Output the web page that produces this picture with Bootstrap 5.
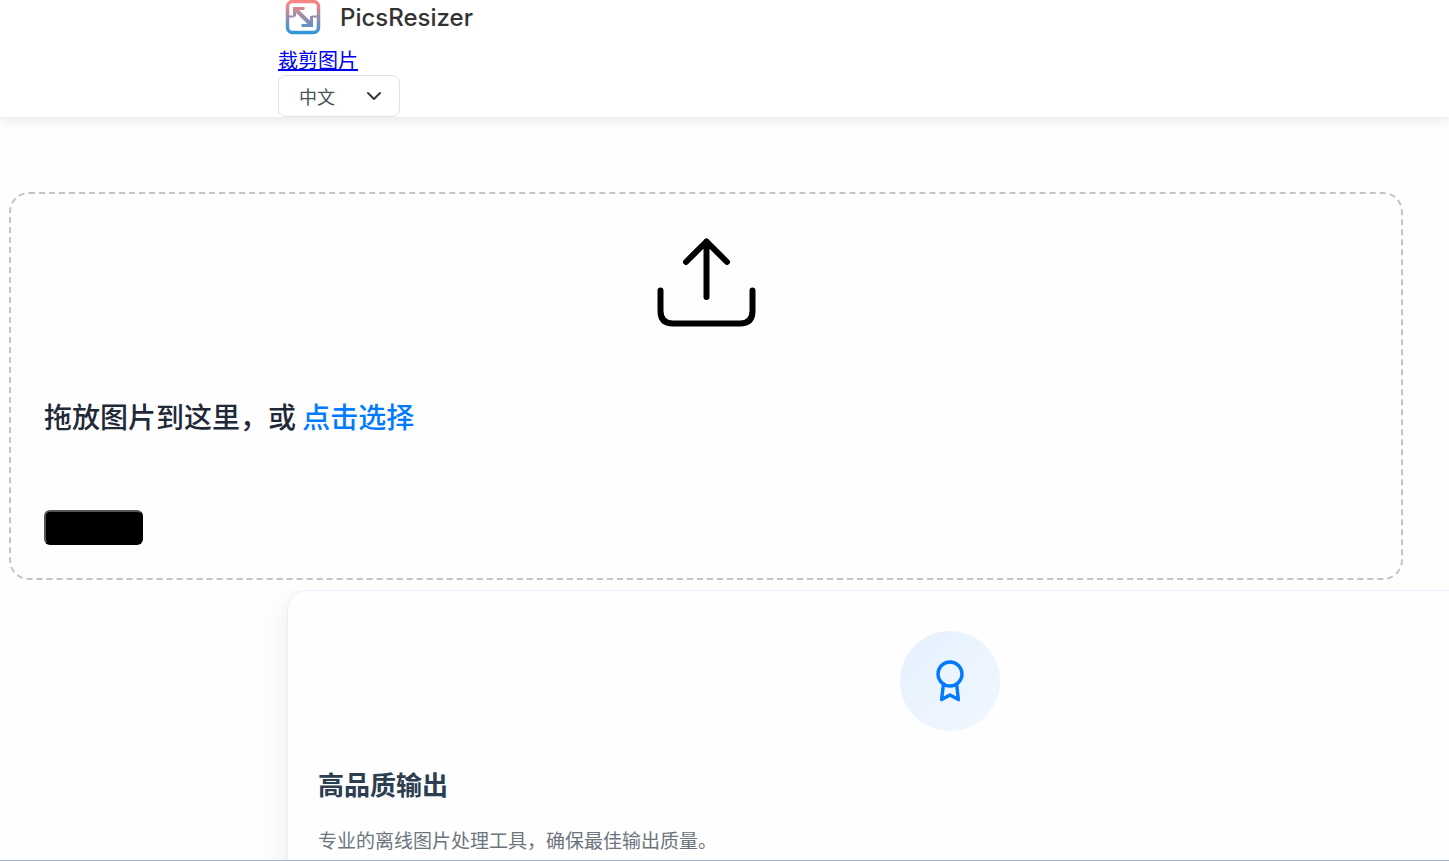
<!DOCTYPE html>
<html lang="zh-CN">
<head>
<meta charset="utf-8">
<meta name="viewport" content="width=device-width, initial-scale=1">
<title>PicsResizer</title>
<link href="https://cdn.jsdelivr.net/npm/bootstrap@5.3.0/dist/css/bootstrap.min.css" rel="stylesheet">
<style>
body { font-family: "Noto Sans CJK SC", sans-serif; background: #fefefe; }
.site-header { background: #fff; box-shadow: 0 2px 12px rgba(0,0,0,.1); }
.site-inner { max-width: 893px; }
.brand-name { font: 500 24px/36px Inter, sans-serif; color: #333; }
.brand-logo { width: 50px; height: 36px; }
.crop-link { font-size: 20px; line-height: 31px; color: #00e; }
.lang-select { width: 122px; height: 42px; padding: 0 0 0 20px; font-size: 18px; line-height: 38px; color: #4a5056; border: 1px solid #dee2e6; border-radius: 8px; background-size: 16px 16px; background-position: right 17px center; }
.drop-zone { margin: 75px 46px 10px 9px; padding: 32px 33px 33px; border: 2px dashed #c4c4c4; border-radius: 20px; }
.upload-icon { width: 112px; height: 112px; }
.drop-title { font-size: 28px; line-height: 42px; margin: 57px 0 73px; font-weight: 500; color: #1f2937; }
.drop-title a { color: #007bff; }
.start-btn { width: 99px; height: 35px; background: #000; border: 2px outset #000; border-radius: 6px; }
.page-main, .features { min-height: 0; }
.features { border-bottom: 1px solid #a9b4c8; }
.feature-card { margin: 0 -164px 0 287px; padding: 40px 30px; background: #fefefe; border: 1px solid #e6f1fd; border-radius: 20px; box-shadow: 0 10px 30px rgba(0,0,0,.08); }
.feature-icon { width: 100px; height: 100px; background: linear-gradient(135deg, #e6f1ff, #f0f7ff); }
.feature-title { font-size: 26px; line-height: 38px; margin: 34px 0 22px; color: #2c3e50; }
.feature-text { font-size: 19px; line-height: 30px; color: #6c757d; }
</style>
</head>
<body class="vh-100 overflow-hidden d-flex flex-column">
<header class="site-header">
  <div class="site-inner mx-auto">
    <div class="d-flex align-items-center">
      <svg class="brand-logo" viewBox="0 0 50 36" fill="none" stroke="url(#lg)" aria-hidden="true">
        <defs><linearGradient id="lg" gradientUnits="userSpaceOnUse" x1="0" y1="0" x2="0" y2="34"><stop offset=".1" stop-color="#f88585"/><stop offset="1" stop-color="#2698dc"/></linearGradient></defs>
        <rect x="9.500" y="1.500" width="31" height="31" rx="5" stroke-width="3.500"/>
        <path d="M9 16.500H16M34 16.500H41" stroke-width="2"/>
        <path d="M17 9L33.500 25" stroke-width="4"/>
        <path d="M16.500 16.500V8.500H26.500M23.500 25.500H33.500V16" stroke-width="3"/>
      </svg>
      <span class="brand-name ms-2 ps-1">PicsResizer</span>
    </div>
    <nav class="d-flex pt-2"><a class="crop-link" href="#crop">裁剪图片</a></nav>
    <label class="visually-hidden" for="lang">语言</label>
    <select id="lang" class="form-select lang-select"><option>中文</option><option>English</option></select>
  </div>
</header>
<main class="page-main d-flex flex-column flex-grow-1">
  <section class="drop-zone flex-shrink-0">
    <svg class="upload-icon d-block mx-auto" viewBox="0 0 112 112" fill="none" stroke="#000" stroke-width="6" stroke-linecap="round" stroke-linejoin="round" aria-hidden="true"><path d="M56.500 71V15.500M36 36L56.500 15.500L77 36M10.500 64.500V85Q10.500 97.500 23 97.500H90Q102.500 97.500 102.500 85V64.500"/></svg>
    <h2 class="drop-title">拖放图片到这里，或 <a class="text-decoration-none" href="#select">点击选择</a></h2>
    <button type="button" class="start-btn d-block" aria-label="开始"></button>
  </section>
  <section class="features flex-grow-1 overflow-hidden">
    <article class="feature-card">
      <div class="feature-icon rounded-circle d-flex align-items-center justify-content-center mx-auto">
        <svg width="48" height="48" viewBox="0 0 24 24" fill="none" stroke="#007bff" stroke-width="1.700" stroke-linecap="round" stroke-linejoin="round" aria-hidden="true"><circle cx="12" cy="8.500" r="6"/><path d="M8.700 13.700L7.800 21.300L12 19L16.200 21.300L15.300 13.700"/></svg>
      </div>
      <h3 class="feature-title fw-bold">高品质输出</h3>
      <p class="feature-text mb-0">专业的离线图片处理工具，确保最佳输出质量。</p>
    </article>
  </section>
</main>
<script src="https://cdn.jsdelivr.net/npm/bootstrap@5.3.0/dist/js/bootstrap.bundle.min.js"></script>
</body>
</html>
